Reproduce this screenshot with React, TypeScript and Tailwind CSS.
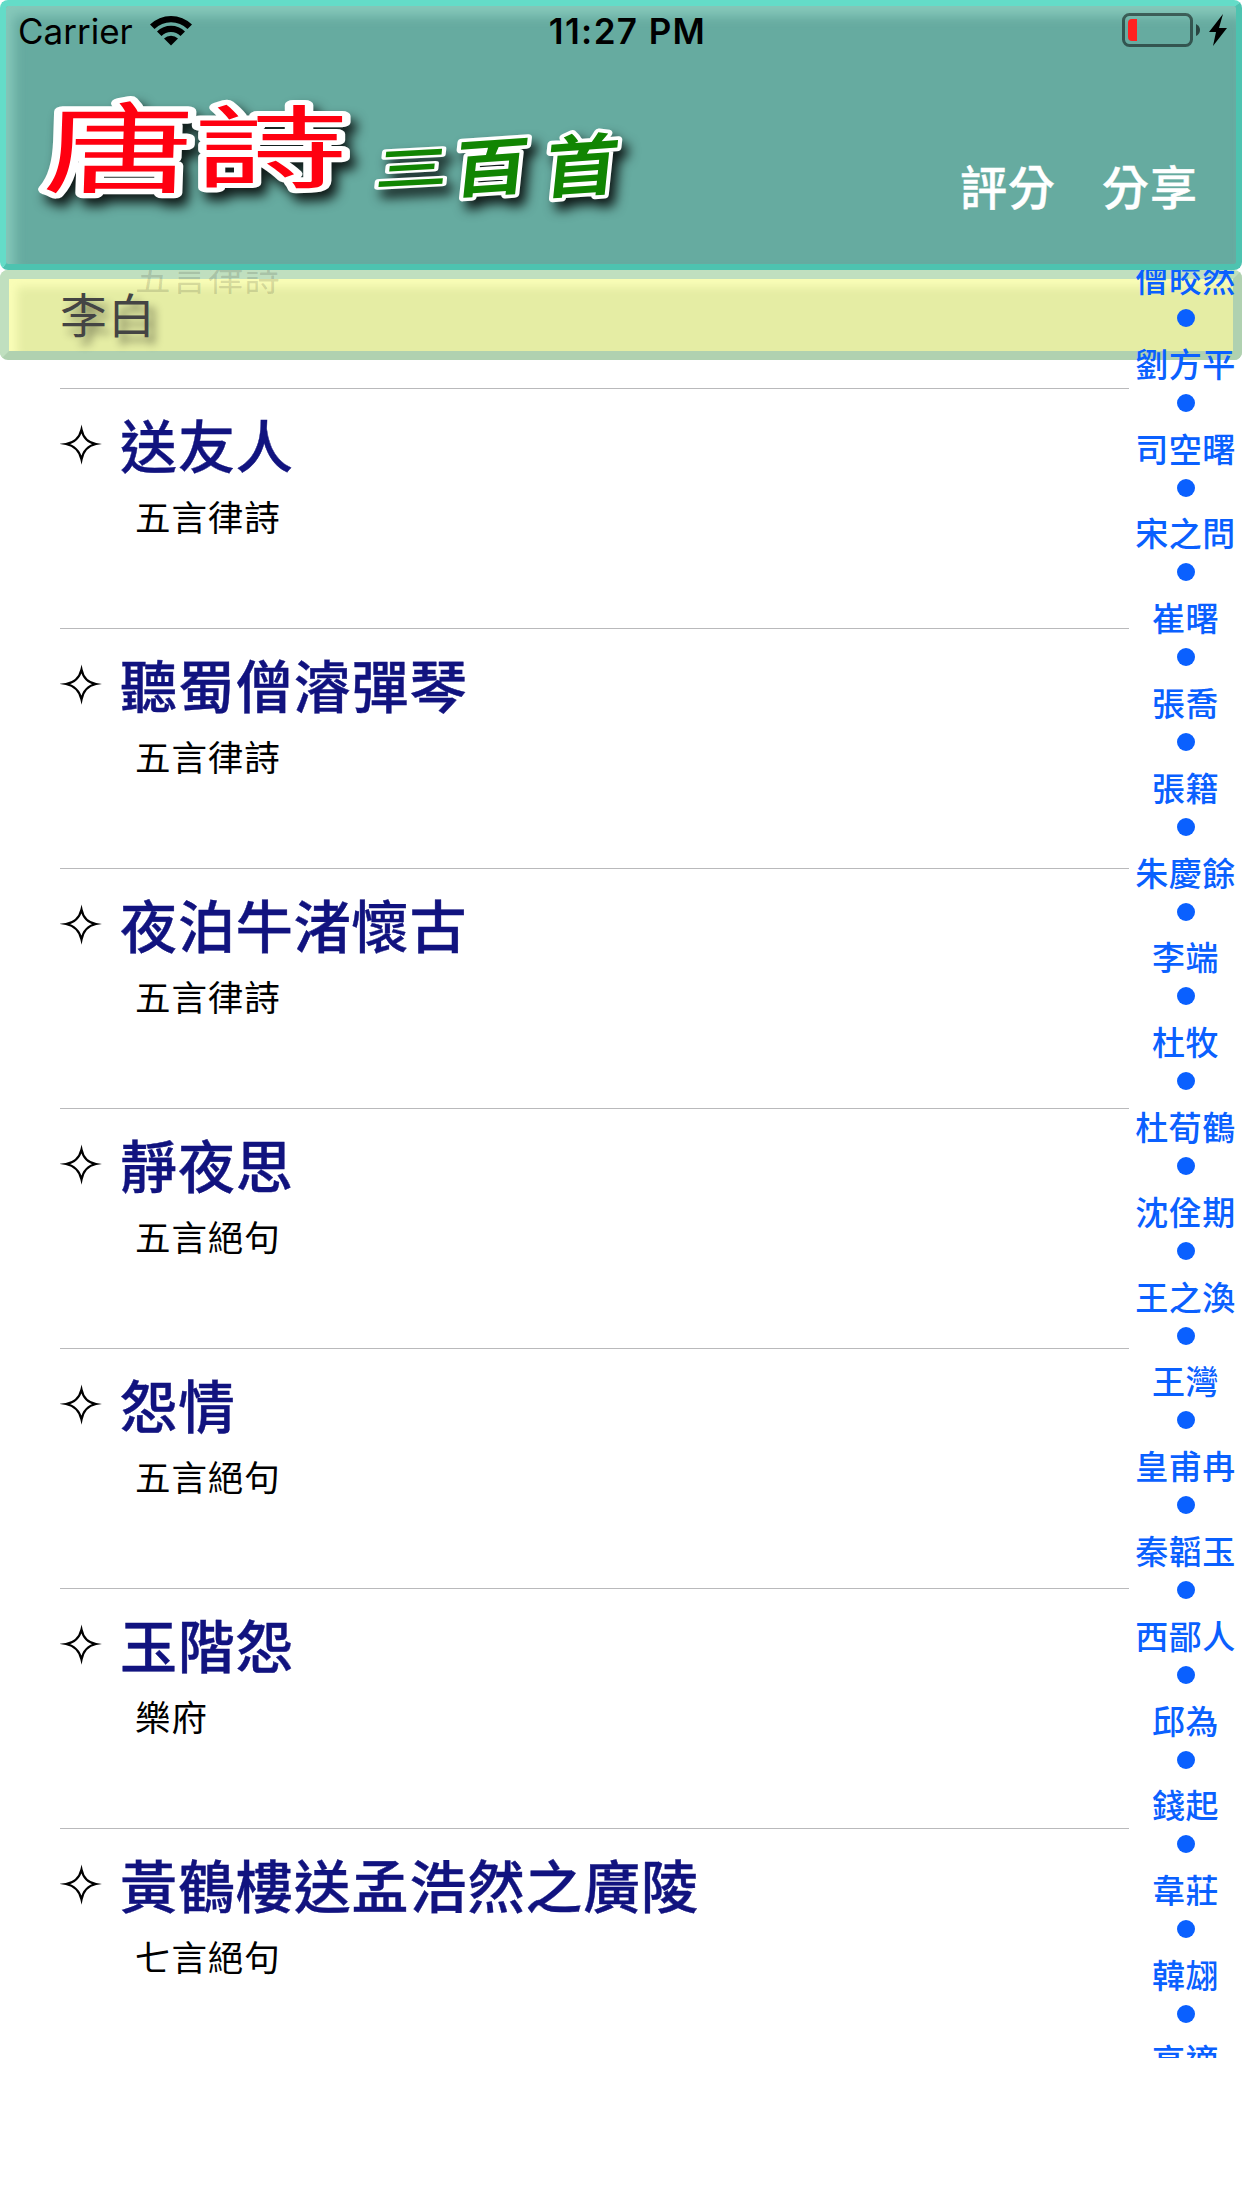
const poems = [
  { title: "送友人", form: "五言律詩" },
  { title: "聽蜀僧濬彈琴", form: "五言律詩" },
  { title: "夜泊牛渚懷古", form: "五言律詩" },
  { title: "靜夜思", form: "五言絕句" },
  { title: "怨情", form: "五言絕句" },
  { title: "玉階怨", form: "樂府" },
  { title: "黃鶴樓送孟浩然之廣陵", form: "七言絕句" },
];

const poets = [
  "僧皎然", "劉方平", "司空曙", "宋之問", "崔曙", "張喬", "張籍", "朱慶餘",
  "李端", "杜牧", "杜荀鶴", "沈佺期", "王之渙", "王灣", "皇甫冉", "秦韜玉",
  "西鄙人", "邱為", "錢起", "韋莊", "韓翃", "高適",
];

function StatusBar() {
  return (
    <div className="grid grid-cols-3 items-center h-[50px] pl-3 pr-2 text-black text-[35px] leading-none font-['Inter',sans-serif]">
      <div className="flex items-center gap-[17px]">
        <span>Carrier</span>
        <svg className="-mt-0.5" width="42" height="31" viewBox="0 0 42 31">
          <path d="M0 9.5A30 30 0 0 1 42 9.5L37.5 14A23.5 23.5 0 0 0 4.500 14Z" />
          <path d="M7 16.500A20 20 0 0 1 35 16.500L30.500 21A13.500 13.500 0 0 0 11.500 21Z" />
          <path d="M14 23.500A10 10 0 0 1 28 23.500L21 30.500Z" />
        </svg>
      </div>
      <span className="justify-self-center pl-[9px] tracking-[1.4px] font-semibold">11:27 PM</span>
      <svg className="justify-self-end -mt-0.5" width="106" height="36" viewBox="0 0 106 36">
        <rect x="1.500" y="2.500" width="68" height="31" rx="6" fill="none" stroke="#000" strokeOpacity="0.5" strokeWidth="3" />
        <path d="M15 7v22h-5a4 4 0 0 1-4-4V11a4 4 0 0 1 4-4Z" fill="#ff2120" />
        <path d="M74 12q4 2 4 6t-4 6Z" fillOpacity="0.6" />
        <path d="M101 2 87 20h7l-3 14 14-18h-8Z" />
      </svg>
    </div>
  );
}

function Logo() {
  return (
    <svg
      width="600"
      height="150"
      viewBox="0 0 600 150"
      className="overflow-visible drop-shadow-[6px_8px_6px_rgba(0,0,0,0.85)] font-['Noto_Sans_CJK_TC',sans-serif]"
      stroke="#fff"
      strokeLinejoin="round"
      strokeLinecap="round"
      paintOrder="stroke"
    >
      <g fill="#ff0010" fontSize="100" fontWeight="400" strokeWidth="11">
        <text transform="translate(18 101) skewX(-2) scale(1.520 0.980)">唐</text>
        <text transform="translate(170 97) scale(1.540 0.900)">詩</text>
      </g>
      <g fill="#118502" fontSize="70" fontWeight="700" strokeWidth="8">
        <text transform="translate(350 102) skewX(-6) skewY(-3) scale(1.040 0.640)">三</text>
        <text transform="translate(428 109) skewX(-6) skewY(-4) scale(1.060 0.900)">百</text>
        <text transform="translate(519 109) skewX(-6) skewY(-4) scale(1.040 0.960)">首</text>
      </g>
    </svg>
  );
}

function Header() {
  return (
    <header className="h-[270px] rounded-lg border-6 border-t-[#64dcc8] border-l-[#64dcc8] border-r-[#4dc3b0] border-b-[#4dc3b0] bg-[#66aba0] shadow-[inset_8px_10px_12px_rgba(150,215,200,0.65)]">
      <StatusBar />
      <div className="flex justify-between pl-[18px] pr-[38px] pt-7">
        <Logo />
        <nav className="flex gap-[46px] pt-[52px] text-[47px] leading-[70px] tracking-[1px] font-medium text-white [-webkit-text-stroke:0.4px_#fff] [text-shadow:5px_7px_9px_rgba(0,0,0,0.7)]">
          <button>評分</button>
          <button>分享</button>
        </nav>
      </div>
    </header>
  );
}

function PoemRow({ title, form }: { title: string; form: string }) {
  return (
    <li className="flex h-60 border-t border-[#b9b9bb]">
      <svg className="mt-[34px] shrink-0" width="42" height="42" viewBox="0 0 42 42">
        <path
          d="M21.500 6.500Q24 19 36 21Q24 23.500 21.500 36.500Q18.500 23.500 6 21Q18.500 19 21.500 6.500Z"
          fill="none"
          stroke="#000"
          strokeWidth="2.200"
          strokeMiterlimit="10"
        />
      </svg>
      <div className="pl-[18px] pt-3.5">
        <h2 className="text-[57px] leading-[80px] tracking-[0.9px] font-medium text-[#11137f] [-webkit-text-stroke:0.4px_#11137f]">{title}</h2>
        <p className="pl-[15px] pt-[5px] text-[35.500px] leading-[56px] tracking-[0.9px] text-black">{form}</p>
      </div>
    </li>
  );
}

export default function App() {
  return (
    <div className="w-[1242px] h-[2208px] overflow-hidden bg-white font-['Noto_Sans_CJK_TC',sans-serif]">
      <Header />
      <main className="relative h-[1788px] overflow-hidden">
        <h1 className="h-[90px] rounded-lg border-9 border-t-[#c0dfbf] border-l-[#c0dfbf] border-r-[#b0d1b0] border-b-[#b0d1b0] bg-[#e5eda4] pl-[51px] text-[47px] leading-[67px] tracking-[1px] text-[#444] shadow-[inset_8px_8px_10px_rgba(252,255,185,0.9)] [text-shadow:6px_7px_8px_rgba(0,0,0,0.45)]">
          李白
        </h1>
        {/* previous row showing through the sticky header */}
        <p className="absolute left-[135px] -top-[22px] text-[35.500px] leading-[56px] tracking-[0.9px] text-black/15">五言律詩</p>
        <ul className="ml-[60px] mr-[113px] pt-7">
          {poems.map((poem) => (
            <PoemRow key={poem.title} {...poem} />
          ))}
        </ul>
        {/* poet index */}
        <nav className="absolute right-0 -top-[13px] w-[113px]">
          {poets.map((poet) => (
            <div key={poet} className="flex flex-col items-center h-[84.800px] text-[#0a60ff]">
              <span className="text-[33px] leading-[42px] tracking-[0.5px] font-medium whitespace-nowrap">{poet}</span>
              <i className="mt-[10px] size-[18px] rounded-full bg-[#0a60ff]" />
            </div>
          ))}
        </nav>
      </main>
    </div>
  );
}
